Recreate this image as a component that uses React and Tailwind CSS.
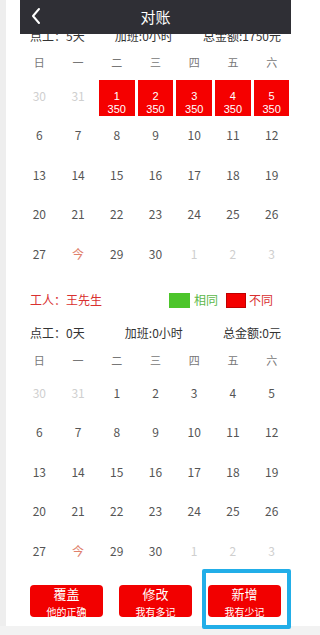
import React from "react";

const FONT = { fontFamily: '"Noto Sans CJK SC", "Noto Sans", sans-serif' };
const WEEK = ["日", "一", "二", "三", "四", "五", "六"];

function buildRows(marked) {
  const cells = [
    { d: "30", t: "prev" },
    { d: "31", t: "prev" },
  ];
  for (let i = 1; i <= 30; i++) {
    cells.push({ d: i === 28 ? "今" : String(i), t: i === 28 ? "today" : "cur", n: i });
  }
  cells.push({ d: "1", t: "next" }, { d: "2", t: "next" }, { d: "3", t: "next" });
  const rows = [];
  for (let r = 0; r < 5; r++) rows.push(cells.slice(r * 7, r * 7 + 7));
  return rows.map((row) =>
    row.map((c) => ({ ...c, marked: c.t === "cur" && marked.includes(c.n) }))
  );
}

function InfoRow({ items }) {
  return (
    <div className="h-[20px] flex items-center justify-between px-[10px] text-[12px] text-[#333] leading-[20px]">
      {items.map((t) => (
        <span key={t}>{t}</span>
      ))}
    </div>
  );
}

function Calendar({ marked, weekPad }) {
  const rows = buildRows(marked);
  return (
    <div>
      <div className={`h-[30px] grid grid-cols-7 items-center ${weekPad}`}>
        {WEEK.map((w) => (
          <div key={w} className="text-center text-[11px] text-[#777]">
            {w}
          </div>
        ))}
      </div>
      {rows.map((row, i) => (
        <div key={i} className="h-[39.5px] grid grid-cols-7">
          {row.map((c, j) => {
            if (c.marked) {
              return (
                <div key={j} className="flex justify-center">
                  <div
                    className="mt-[4px] h-[36px] w-[35.5px] bg-[#f50000] flex flex-col items-center pt-[9.5px] text-white text-[11px] leading-[13px]"
                    style={{ fontFamily: '"Liberation Sans", Arial, sans-serif' }}
                  >
                    <span className="block h-[13px]">{c.d}</span>
                    <span className="block h-[13px]">350</span>
                  </div>
                </div>
              );
            }
            const color =
              c.t === "prev" || c.t === "next"
                ? "text-[#cfcfcf]"
                : c.t === "today"
                ? "text-[#e0806c]"
                : "text-[#555]";
            return (
              <div
                key={j}
                className={`flex items-center justify-center text-[12px] ${color}`}
              >
                {c.d}
              </div>
            );
          })}
        </div>
      ))}
    </div>
  );
}

function Btn({ title, sub }) {
  return (
    <div className="w-[73px] h-[32px] rounded-[4px] bg-[#f20000] flex flex-col items-center pt-[1px] text-white">
      <span className="text-[13px] leading-[16px]">{title}</span>
      <span className="mt-[4px] text-[10px] leading-[11px]">{sub}</span>
    </div>
  );
}

export default function App() {
  return (
    <div
      className="relative w-[320px] h-[635px] bg-white flex flex-col overflow-hidden"
      style={FONT}
    >
      <div className="flex-1 flex">
        <div className="w-[6px] bg-[#eeeeee]" />
        <div className="ml-[14px] w-[271px] pt-[26px]">
          <InfoRow items={["点工：5天", "加班:0小时", "总金额:1750元"]} />
          <Calendar marked={[1, 2, 3, 4, 5]} weekPad="pt-[2px]" />

          <div className="mt-[13.5px] h-[26px] flex items-center justify-between pl-[10px] pr-[18px]">
            <span className="text-[12px] text-[#d93030]">工人：王先生</span>
            <div className="flex items-center">
              <span className="w-[21px] h-[15px] bg-[#4cc52a]" />
              <span className="ml-[4px] text-[12px] text-[#5cb84a]">相同</span>
              <span className="ml-[8px] w-[20px] h-[15px] bg-[#f40000] border border-[#c00000]" />
              <span className="ml-[3px] text-[12px] text-[#d93030]">不同</span>
            </div>
          </div>

          <div className="mt-[10px]">
            <InfoRow items={["点工：0天", "加班:0小时", "总金额:0元"]} />
          </div>
          <Calendar marked={[]} weekPad="pt-[4px]" />

          <div className="mt-[14.5px] flex justify-between px-[10px]">
            <Btn title="覆盖" sub="他的正确" />
            <Btn title="修改" sub="我有多记" />
            <Btn title="新增" sub="我有少记" />
          </div>
        </div>
      </div>
      <div className="h-[9px] bg-[#f2f2f2]" />

      {/* fixed header overlay */}
      <div className="absolute left-[20px] top-0 w-[271px] h-[34px] bg-[#2f2f35] flex items-center justify-center">
        <svg
          className="absolute left-[11px] top-[7px]"
          width="10"
          height="18"
          viewBox="0 0 10 18"
          fill="none"
        >
          <path
            d="M8 2 L2 9 L8 16"
            stroke="white"
            strokeWidth="2"
            strokeLinecap="round"
            strokeLinejoin="round"
          />
        </svg>
        <span className="text-white text-[15px]">对账</span>
      </div>

      {/* highlight overlay */}
      <div className="absolute left-[202px] top-[569px] w-[89px] h-[60px] border-[4px] border-[#22aee8] rounded-[2px]" />
    </div>
  );
}
